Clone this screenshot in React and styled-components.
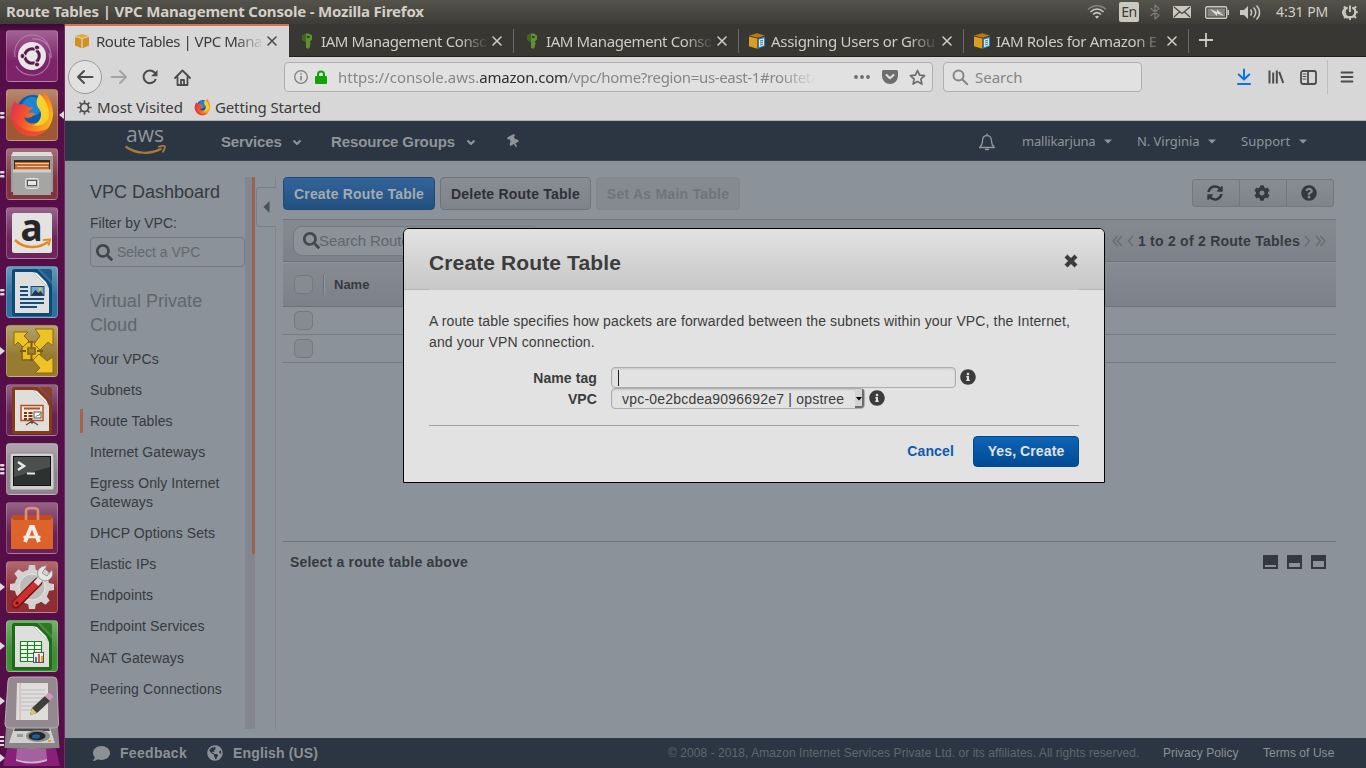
import React from 'react';
import styled, { createGlobalStyle } from 'styled-components';
import {
  FaSearch, FaSyncAlt, FaCog, FaQuestionCircle, FaInfoCircle, FaComment, FaGlobeAmericas, FaThumbtack,
} from 'react-icons/fa';

const ui = '"Noto Sans", "Open Sans", sans-serif';
const arial = '"Liberation Sans", Arial, sans-serif';

const GlobalStyle = createGlobalStyle`
  * { box-sizing: border-box; }
  body { margin: 0; background: #8b9299; font-family: ${arial}; overflow: hidden; }
  svg { display: block; flex: none; overflow: visible; }
`;

const Screen = styled.div`
  position: relative;
  width: 1366px;
  height: 768px;
  overflow: hidden;
  display: grid;
  grid-template: 24px 744px / 65px 1301px;
`;

/* ---------- desktop panel ---------- */
const Panel = styled.header`
  grid-column: 1 / 3;
  display: flex;
  align-items: center;
  justify-content: space-between;
  padding: 0 8px 0 6px;
  background: linear-gradient(#54534b, #3d3c38);
  color: #d3cfc6;
  font-family: ${ui};
`;
const WindowTitle = styled.div`
  padding-bottom: 2px;
  font-size: 15px;
  font-weight: 700;
  line-height: 22px;
  letter-spacing: -0.19px;
  white-space: nowrap;
`;
const Indicators = styled.div`
  display: flex;
  align-items: center;
  height: 24px;
`;
const Indicator = styled.div`
  display: flex;
  justify-content: center;
  width: ${(p) => p.$w}px;
`;
const Keyboard = styled.div`
  width: 20px;
  height: 20px;
  border-radius: 2px;
  background: #cbc8bf;
  color: #3d3c38;
  font-size: 14px;
  line-height: 20px;
  text-align: center;
  letter-spacing: -0.5px;
`;
const Clock = styled.div`
  width: 53px;
  margin: 0 13px 0 15px;
  padding-bottom: 1px;
  font-size: 14px;
  letter-spacing: -0.05px;
  white-space: nowrap;
`;

/* ---------- launcher ---------- */
const LauncherBar = styled.nav`
  height: 744px;
  padding-top: 6px;
  overflow: hidden;
  background: linear-gradient(#3a0a30 0, #560e48 8px);
  border-right: 1px solid #6d3062;
`;
const LauncherRow = styled.div`
  display: grid;
  grid-template-columns: 6px 52px 6px;
  height: 52px;
  margin-bottom: 7px;
  align-items: center;
`;
const Tile = styled.div`
  width: 52px;
  height: 52px;
  border-radius: 4px;
  border: 1px solid rgba(255, 255, 255, 0.2);
  background: linear-gradient(rgba(255, 255, 255, 0.3), rgba(255, 255, 255, 0.02) 60%), ${(p) => p.$tint};
  display: flex;
  align-items: center;
  justify-content: center;
`;
const StackRow = styled.div`
  margin-top: -2px;
`;

/* ---------- browser ---------- */
const Browser = styled.div`
  display: grid;
  grid-template-rows: 33px 40px 24px 40px 577px 30px;
`;
const TabStrip = styled.div`
  display: flex;
  background: #383733;
  border-bottom: 1px solid #201f1d;
  font-family: ${ui};
`;
const Tab = styled.div`
  position: relative;
  width: ${(p) => (p.$active ? 224 : 225)}px;
  height: 33px;
  display: flex;
  align-items: center;
  padding: 0 0 2px ${(p) => (p.$active ? 9 : 10)}px;
  background: ${(p) => (p.$active ? '#d7d7d7' : 'transparent')};
  border-top: 2px solid ${(p) => (p.$active ? '#d9714b' : 'transparent')};
  color: ${(p) => (p.$active ? '#3a3b3c' : '#cfccc4')};
  &:not(:first-child)::after {
    content: '';
    position: absolute;
    right: 0;
    top: 3px;
    width: 1px;
    height: 24px;
    background: #6a6966;
  }
`;
const TabLabel = styled.div`
  width: 165px;
  margin: 0 5px 0 6px;
  font-size: 15px;
  line-height: 24px;
  letter-spacing: ${(p) => p.$ls}px;
  white-space: nowrap;
  mask-image: linear-gradient(90deg, #000 84%, rgba(0, 0, 0, 0.1) 100%);
`;
const NewTab = styled.div`
  padding: 9px 10px;
`;
const Toolbar = styled.div`
  display: flex;
  align-items: center;
  background: #d7d7d7;
  font-family: ${ui};
  font-size: 15px;
`;
const Back = styled.div`
  width: 34px;
  height: 34px;
  margin: 0 8px 0 3px;
  border: 1px solid #9a9a99;
  border-radius: 50%;
  background: #e1e1e1;
  display: flex;
  align-items: center;
  justify-content: center;
`;
const PageTools = styled.div`
  display: flex;
  margin: 0 86px 0 6px;
`;
const ToolIcon = styled.div`
  width: 32px;
  display: flex;
  justify-content: center;
`;
const Field = styled.div`
  width: ${(p) => p.$w}px;
  height: 30px;
  margin-right: 10px;
  display: flex;
  align-items: center;
  border: 1px solid #b0aea9;
  border-radius: 4px;
  background: #e1e1e1;
  color: #868686;
`;
const UrlIcons = styled.div`
  display: flex;
  align-items: center;
  gap: 7px;
  margin-left: 9px;
`;
const Url = styled.div`
  width: 484px;
  margin: 0 31px 0 11px;
  letter-spacing: -0.34px;
  white-space: nowrap;
  mask-image: linear-gradient(90deg, #000 91%, transparent 99%);
  b { font-weight: 400; color: #2e2e2e; letter-spacing: -0.2px; }
  span { letter-spacing: 0; }
`;
const UrlActions = styled.div`
  display: flex;
  align-items: center;
  gap: 11px;
`;
const LensBox = styled.div`
  padding: 0 7px 0 8px;
`;
const RightTools = styled.div`
  display: flex;
  align-items: center;
  margin-left: 76px;
`;
const ToolDivider = styled.div`
  width: 1px;
  height: 34px;
  margin: 0 3px;
  background: #bdbdbc;
`;
const Bookmarks = styled.div`
  display: flex;
  align-items: center;
  padding: 0 0 3px 12px;
  border-bottom: 1px solid #b0aea9;
  background: #d7d7d7;
  color: #3a3b3c;
  font-family: ${ui};
  font-size: 15px;
  white-space: nowrap;
`;
const Bookmark = styled.div`
  width: ${(p) => p.$w}px;
  display: flex;
  align-items: center;
  gap: ${(p) => p.$gap}px;
  letter-spacing: ${(p) => p.$ls}px;
`;

/* ---------- console chrome ---------- */
const ConsoleNav = styled.div`
  display: flex;
  align-items: center;
  padding: 2px 0 0 59px;
  background: #2b3642;
  color: #8f959a;
  border-bottom: 1px solid #3a4550;
`;
const Logo = styled.div`
  width: 97px;
`;
const NavItem = styled.div`
  width: ${(p) => p.$w}px;
  display: flex;
  align-items: center;
  justify-content: space-between;
  margin-right: ${(p) => p.$mr}px;
  font-size: 15px;
  font-weight: 700;
  letter-spacing: -0.13px;
`;
const AccountItem = styled(NavItem)`
  padding-bottom: 1px;
  font-family: ${ui};
  font-size: 13px;
  font-weight: 400;
  letter-spacing: ${(p) => p.$ls || 0}px;
`;
const Bell = styled.div`
  margin: 0 26px 0 458px;
`;
const FooterBar = styled.footer`
  display: flex;
  align-items: center;
  padding-left: 28px;
  background: #2b3642;
  color: #8b9196;
  font-size: 12px;
  white-space: nowrap;
`;
const FooterStrong = styled.div`
  width: ${(p) => p.$w}px;
  display: flex;
  align-items: center;
  gap: 10px;
  font-size: 14px;
  font-weight: 700;
  letter-spacing: ${(p) => p.$ls}px;
`;
const Legal = styled.div`
  width: 471px;
  margin: 0 24px 0 321px;
  color: #5e6870;
  letter-spacing: 0.065px;
`;
const FooterLink = styled.div`
  width: ${(p) => p.$w}px;
  letter-spacing: 0.06px;
`;

/* ---------- console content ---------- */
const Content = styled.main`
  display: flex;
  padding: 16px 0 9px 15px;
  background: #8b9299;
  color: #363a40;
  font-size: 14px;
`;
const Sidebar = styled.aside`
  width: 165px;
  padding-left: 10px;
`;
const Heading = styled.div`
  height: 29px;
  font-size: 18px;
  line-height: 31px;
`;
const FilterLabel = styled.div`
  height: 31px;
  line-height: 34px;
  letter-spacing: 0.05px;
`;
const VpcFilter = styled.div`
  width: 155px;
  height: 30px;
  padding-left: 5px;
  display: flex;
  align-items: center;
  gap: 4px;
  border: 1px solid #757982;
  border-radius: 4px;
  color: #63696f;
  svg { color: #41454a; }
`;
const Section = styled.div`
  margin: 22px 0 7.1px;
  color: #60676d;
  font-size: 18px;
  line-height: 24px;
  letter-spacing: 0.03px;
`;
const SideLink = styled.div`
  margin-left: -10px;
  padding: 6px 0 6.06px 10px;
  line-height: 19px;
  letter-spacing: 0.1px;
  background: ${(p) => (p.$active ? 'linear-gradient(#a8614a, #a8614a) 0 3px / 3px 24px no-repeat' : 'none')};
`;
const Track = styled.div`
  width: 10px;
  height: 552px;
  background: #83868f;
  display: flex;
  justify-content: flex-end;
`;
const Thumb = styled.div`
  width: 3px;
  height: 377px;
  background: #98644f;
`;
const Rail = styled.div`
  width: 21px;
  height: 552px;
  margin-right: 7px;
  padding-top: 10px;
  background: linear-gradient(#80848c, #80848c) 20px 0 / 1px 100% no-repeat;
`;
const Collapse = styled.div`
  width: 20px;
  height: 40px;
  margin-left: 1px;
  padding: 13px 0 0 6px;
  border: 1px solid #7b7f88;
  border-right: 0;
  border-radius: 4px 0 0 4px;
  background: #8b9299;
`;
const Main = styled.section`
  width: 1053px;
`;
const ActionRow = styled.div`
  display: flex;
  justify-content: space-between;
  height: 42px;
  padding-right: 2px;
`;
const Actions = styled.div`
  display: flex;
  gap: 5px;
`;
const Action = styled.div`
  width: ${(p) => p.$w}px;
  height: 33px;
  border: 1px solid ${(p) => (p.$kind === 'primary' ? '#1e4a7a' : p.$kind === 'off' ? '#82868d' : '#6f737b')};
  border-radius: 4px;
  background: ${(p) => (p.$kind === 'primary' ? 'linear-gradient(#33649a, #214f7f)' : p.$kind === 'off' ? '#858a91' : 'linear-gradient(#888c93, #7f838a)')};
  color: ${(p) => (p.$kind === 'primary' ? '#a4abb1' : p.$kind === 'off' ? '#6f757c' : '#2d3137')};
  font-weight: 700;
  line-height: 32px;
  text-align: center;
  letter-spacing: ${(p) => p.$ls}px;
  white-space: nowrap;
`;
const IconGroup = styled.div`
  display: flex;
  width: 142px;
  height: 28px;
  margin-top: 2px;
  border: 1px solid #73777f;
  border-radius: 3px;
  background: linear-gradient(#888c93, #7f838a);
  color: #343840;
`;
const IconCell = styled.div`
  flex: 1;
  padding-right: 2px;
  display: flex;
  align-items: center;
  justify-content: center;
  & + & { border-left: 1px solid #73777f; }
`;
const FilterBar = styled.div`
  height: 43px;
  display: flex;
  align-items: center;
  justify-content: space-between;
  padding: 0 10px;
  border-top: 1px solid #70747c;
  border-bottom: 1px solid #6d7179;
  background: linear-gradient(#858990, #7d8189);
`;
const TableSearch = styled.div`
  width: 248px;
  height: 30px;
  padding-left: 9px;
  display: flex;
  align-items: center;
  border: 1px solid #747981;
  border-radius: 9px;
  background: #8b9299;
  color: #60666c;
  font-size: 15px;
  letter-spacing: -0.1px;
  svg { color: #43474e; margin-right: -1px; }
`;
const Pager = styled.div`
  display: flex;
  align-items: center;
  gap: 4px;
  color: #363a40;
  font-weight: 700;
  letter-spacing: 0.25px;
  white-space: nowrap;
`;
const TableHead = styled.div`
  height: 45px;
  display: flex;
  align-items: center;
  padding-left: 11px;
  border-top: 1px solid #91969d;
  border-bottom: 1px solid #6d7179;
  background: linear-gradient(#868a92, #7c8088);
  font-size: 13px;
  font-weight: 700;
`;
const HeadDivider = styled.div`
  width: 2px;
  height: 21px;
  margin: 0 9px 0 10px;
  background: linear-gradient(90deg, #6d7179 50%, #91969d 50%);
`;
const TableRow = styled.div`
  height: 28px;
  padding: 4px 0 0 11px;
  border-bottom: 1px solid #767a82;
`;
const Check = styled.div`
  width: 19px;
  height: 19px;
  border: 1px solid #747880;
  border-radius: 5px;
  background: #868b92;
`;
const Detail = styled.div`
  height: 41px;
  margin-top: 178px;
  padding: 0 10px 0 7px;
  display: flex;
  align-items: center;
  justify-content: space-between;
  border-top: 1px solid #70747c;
  font-weight: 700;
  letter-spacing: 0.2px;
  line-height: 16px;
`;
const SplitIcons = styled.div`
  display: flex;
  gap: 9px;
`;
const SplitIcon = styled.div`
  width: 15px;
  height: 14px;
  border: solid #343840;
  border-width: ${(p) => p.$top}px 2px 2px;
`;

/* ---------- dialog ---------- */
const Dialog = styled.div`
  position: absolute;
  left: 403px;
  top: 228px;
  width: 702px;
  height: 255px;
  border: 1px solid #000;
  border-radius: 6px 6px 0 0;
  background: #e2e2e2;
  color: #3c3c3c;
  font-size: 14px;
  overflow: hidden;
`;
const DialogHead = styled.div`
  height: 61px;
  padding: 7px 26px 0 25px;
  display: flex;
  align-items: center;
  justify-content: space-between;
  background:
    linear-gradient(#b4b4b4, #b4b4b4) 0 100% / 25px 1px no-repeat,
    linear-gradient(#b4b4b4, #b4b4b4) 100% 100% / 25px 1px no-repeat,
    linear-gradient(#e2e2e2, #c7c7c7);
  font-size: 21px;
  font-weight: 700;
  letter-spacing: 0.12px;
  svg { margin-bottom: 4px; }
`;
const DialogBody = styled.div`
  padding: 21px 25px 0;
`;
const Blurb = styled.p`
  margin: 0 0 14px;
  line-height: 21px;
  letter-spacing: 0.13px;
  white-space: nowrap;
`;
const FormRow = styled.label`
  display: flex;
  align-items: center;
  height: 21px;
  & > svg { margin-bottom: 2px; }
`;
const FormLabel = styled.span`
  width: 168px;
  margin-right: 14px;
  text-align: right;
  font-weight: 700;
  letter-spacing: 0.1px;
`;
const TextInput = styled.span`
  width: 345px;
  height: 21px;
  margin-right: 4px;
  padding: 2px 6px;
  border: 1px solid #adadad;
  border-radius: 4px;
  box-shadow: inset 0 1px 2px rgba(0, 0, 0, 0.12);
`;
const Caret = styled.span`
  display: block;
  width: 1px;
  height: 16px;
  background: #222;
`;
const Select = styled.span`
  width: 254px;
  height: 21px;
  margin-right: 4px;
  padding-left: 10px;
  display: flex;
  justify-content: space-between;
  border: 1px solid #adadad;
  border-radius: 4px;
  box-shadow: inset 0 1px 2px rgba(0, 0, 0, 0.12);
  line-height: 20px;
  letter-spacing: 0.2px;
  white-space: nowrap;
`;
const SelectArrow = styled.span`
  width: 9px;
  height: 19px;
  padding: 8px 0 0 1px;
  border-right: 2px solid #6c6c6c;
  border-bottom: 2px solid #6c6c6c;
  border-radius: 0 2px 3px 0;
  background: #d3d3d3;
`;
const DialogActions = styled.div`
  margin-top: 16px;
  padding-top: 10px;
  display: flex;
  align-items: center;
  justify-content: flex-end;
  border-top: 1px solid #a3a3a3;
`;
const Cancel = styled.span`
  margin-right: 19px;
  padding-bottom: 2px;
  color: #1059ad;
  font-weight: 700;
  letter-spacing: 0.15px;
`;
const Confirm = styled.span`
  width: 106px;
  height: 31px;
  border: 1px solid #00498f;
  border-radius: 4px;
  background: linear-gradient(#0e64b6, #004a92);
  color: #e2e2e2;
  font-weight: 700;
  line-height: 29px;
  text-align: center;
  letter-spacing: 0.1px;
`;

/* ---------- small drawings ---------- */
const Stroke = ({ s = 16, w = 2, c = '#4b4c4d', children, vb, ...rest }) => (
  <svg width={s} height={s} viewBox={vb || '0 0 16 16'} fill="none" stroke={c} strokeWidth={w} strokeLinecap="round" strokeLinejoin="round" {...rest}>{children}</svg>
);
const CloseX = ({ c }) => <Stroke s={12} vb="0 0 12 12" w={1.6} c={c}><path d="M2 2l8 8M10 2l-8 8" /></Stroke>;
const Caretlet = () => <svg width="8" height="5" viewBox="0 0 8 5"><path d="M0 .5h8L4 4.5z" fill="#8f959a" /></svg>;
const ChevronMini = () => <Stroke s={10} vb="0 0 10 10" w={2} c="#8f959a"><path d="M1.500 3.500L5 7l3.500-3.500" strokeLinecap="butt" /></Stroke>;

const CubeIcon = () => (
  <svg width="16" height="16" viewBox="0 0 16 16">
    <path d="M1 3l7-2 7 2-7 2z" fill="#e2a73a" />
    <path d="M1 4l6.4 1.8v9.4L1 12.6zM15 4L8.6 5.8v9.4l6.4-2.6z" fill="#d2921f" />
  </svg>
);
const DocCubeIcon = () => (
  <svg width="16" height="16" viewBox="0 0 16 16">
    <path d="M0 2.6L8 .2l8 2.4-7.5 2.2z" fill="#b97a14" />
    <path d="M0 3.4l8.4 2.2v10.2L0 13.2z" fill="#dd9d22" />
    <path d="M9 5.6l7-2v9.6l-7 2.6z" fill="#2f7fae" />
    <path d="M10 6.6l5-1.4v7.2l-5 1.8z" fill="#dce8ee" />
    <path d="M11 8l3-.8M11 10l3-.9M11 12l3-.9" stroke="#2f7fae" />
  </svg>
);
const KeyIcon = () => (
  <svg width="16" height="16" viewBox="0 0 16 16">
    <path d="M3.500 2.500L7 .5h3l3 2v4l-2 2v1.300l1 .8-1 1.200v2.200L9 16l-2-1.200V9L3.500 7z" fill="#5d8f33" />
    <path d="M3.500 2.500L7 .5v14.300V9L3.500 7z" fill="#3d661e" />
    <rect x="8" y="3" width="2.500" height="2" fill="#2c4716" />
  </svg>
);
const FirefoxIcon = ({ s, id }) => (
  <svg width={s} height={s} viewBox="0 0 48 48">
    <defs>
      <linearGradient id={id} x1="0" y1=".2" x2="1" y2=".6">
        <stop offset="0" stopColor="#e0275a" /><stop offset=".4" stopColor="#f0562a" /><stop offset="1" stopColor="#fbb51c" />
      </linearGradient>
    </defs>
    <circle cx="25" cy="20" r="17" fill="#0a5cb0" />
    <circle cx="24" cy="15" r="10" fill="#1b86d8" />
    <path d="M6 9c1 2 3 4 5 4 3-1 6 0 8 2l6 1c-1 3-4 3-5 5 2 1 6 0 8 2-3 1-4 4-8 4-3 0-3-1-4 0 2 5 8 7 13 5 7-3 10-9 8-16-4-4-5-10 0-16 4 4 9 14 9 22 0 14-10 24-22 24S2 36 2 24C2 18 4 13 6 9z" fill={`url(#${id})`} />
    <path d="M32 2c-4 5-4 11-1 15 5 6 2 15-6 18 10 2 17-5 17-12 0-8-5-17-10-21z" fill="#f9d02c" />
    <path d="M2 24c0 12 10 22 22 22 7 0 12-3 16-8-12 7-31 3-38-14z" fill="#e83a31" opacity=".75" />
  </svg>
);

const DocTile = ({ color, children }) => (
  <svg width="50" height="50" viewBox="0 0 50 50">
    <path d="M5 5a3 3 0 013-3h34a3 3 0 013 3v41a3 3 0 01-3 3H8a3 3 0 01-3-3z" fill={color} opacity=".45" />
    <path d="M5 5a3 3 0 013-3h22l15 16v28a3 3 0 01-3 3H8a3 3 0 01-3-3z" fill={color} />
    <path d="M33 2h9a3 3 0 013 3v9z" fill={color} opacity=".6" />
    <path d="M8 5h18l16 16v25H8z" fill="#dededd" />
    <path d="M26 5l16 16-3-6-9-9z" fill="#f4f4f4" />
    {children}
  </svg>
);

const gearTeeth = [0, 45, 90, 135, 180, 225, 270, 315];

const launcher = [
  { tint: '#7a1f66', icon: (
    <svg width="50" height="50" viewBox="0 0 50 50">
      <path d="M8 26C6 14 14 4 25 4c10 0 17 7 18 16M42 22c3 10-3 20-14 22-9 1-16-3-19-9M25 8c12-1 20 8 19 19" fill="none" stroke="#c58cba" strokeWidth="1.200" opacity=".7" />
      <circle cx="25" cy="25" r="14" fill="#e8e6e7" />
      <circle cx="25" cy="25" r="7.300" fill="none" stroke="#5b1a4d" strokeWidth="3" />
      <path d="M25 25h-12M25 25l6-10.500M25 25l6 10.500" stroke="#e8e6e7" strokeWidth="1.500" />
      <circle cx="15.500" cy="25" r="2.500" fill="#5b1a4d" stroke="#e8e6e7" /><circle cx="30" cy="16.500" r="2.500" fill="#5b1a4d" stroke="#e8e6e7" /><circle cx="30" cy="33.500" r="2.500" fill="#5b1a4d" stroke="#e8e6e7" />
    </svg>) },
  { tint: '#9a5630', pips: 2, focused: true, icon: <FirefoxIcon s={46} id="foxBig" /> },
  { tint: '#7d2f3c', pips: 2, icon: (
    <svg width="50" height="50" viewBox="0 0 50 50">
      <path d="M4 6h42v37H4z" fill="#9b9b9a" /><path d="M4 7l2-4h38l2 4z" fill="#dcdcdc" />
      <path d="M7 11h36v10H7z" fill="#3b2a22" />
      <path d="M8 13h34v8H8z" fill="#c9672f" /><path d="M8 14.500h34M10 17.500h31" stroke="#f0cfa0" strokeWidth="1.200" />
      <path d="M6 20.500h38V46H6z" fill="#a5a5a4" /><path d="M6 20.500h38v3H6z" fill="#cfcfcf" />
      <rect x="18.500" y="29.500" width="13" height="10" rx="2" fill="#b5b5b5" stroke="#e3e3e3" />
      <rect x="20.500" y="31.500" width="9" height="5" fill="#e8e8e8" stroke="#555" />
    </svg>) },
  { tint: '#6b2159', icon: (
    <svg width="50" height="50" viewBox="0 0 50 50">
      <rect x="5" y="5" width="40" height="40" rx="2.500" fill="#e3e3e2" />
      <text x="24.500" y="33" textAnchor="middle" fontFamily="Noto Sans, sans-serif" fontWeight="700" fontSize="37" fill="#262626">a</text>
      <path d="M8 32c9 9 23 9 33 2" fill="none" stroke="#e58a1b" strokeWidth="2.500" />
      <path d="M36 32l7-.5-1.500 6" fill="none" stroke="#e58a1b" strokeWidth="2" />
    </svg>) },
  { tint: '#2b6d9b', pips: 2, icon: (
    <DocTile color="#0d4a78">
      <path d="M13 20h8M13 24h8M13 28h8M13 32h24M13 36h24M13 40h17" stroke="#124f7d" strokeWidth="1.800" />
      <rect x="24" y="19.500" width="13" height="9" fill="#6fa9cf" stroke="#124f7d" /><path d="M24.500 28l4-5 3 3 2-2 3 4z" fill="#333" /><circle cx="33" cy="22" r="1.500" fill="#e6c23c" />
    </DocTile>) },
  { tint: '#94782c', pips: 1, icon: (
    <svg width="50" height="50" viewBox="0 0 50 50">
      <path d="M18 19h13v12H18z" fill="none" stroke="#7b5c0c" strokeWidth="7" />
      <path d="M18 19h13v12H18z" fill="none" stroke="#e9bb24" strokeWidth="4.500" />
      <path d="M7 6h14l-4 4 5 5-6 6-5-5-4 4zM28 3h18v17l-5-4-8 8-6-6 6-8zM46 47H28l5-5-7-8 6-6 8 7 6-4z" fill="#edc327" stroke="#8a690e" strokeWidth="1" />
      <path d="M24.500 15v6M24.500 29v6M13 25h6M30 25h6" stroke="#7b5c0c" strokeWidth="2" />
    </svg>) },
  { tint: '#64204e', icon: (
    <DocTile color="#863c12">
      <path d="M14 20.500h22v15H14z" fill="#f0e9e4" stroke="#b4511d" strokeWidth="1.500" />
      <path d="M17 23.500h16" stroke="#b4511d" strokeWidth="2" /><path d="M17 28h3M17 31h3M17 34h3M21.500 28h4M21.500 31h4M21.500 34h4" stroke="#7a3612" strokeWidth="1.800" />
      <rect x="27" y="27" width="7" height="6" fill="#fff" stroke="#555" /><path d="M28.500 32l2-2 1 1 2-3" fill="none" stroke="#3c9a35" />
      <path d="M25 36l-6 4M25 36l6 4M25 36v3" stroke="#555" strokeWidth="1.300" />
    </DocTile>) },
  { tint: '#8e8089', pips: 3, icon: (
    <svg width="50" height="50" viewBox="0 0 50 50">
      <rect x="3" y="9" width="44" height="37" rx="2" fill="#cfcfce" stroke="#8b8b8b" />
      <rect x="6.500" y="12.500" width="37" height="29" fill="#2d3130" stroke="#111" />
      <path d="M7 13h36v10L7 33z" fill="#4b504e" />
      <path d="M11 18l6 4-6 4" fill="none" stroke="#e9e9e9" strokeWidth="2.500" /><path d="M20 29.500h8" stroke="#e9e9e9" strokeWidth="2" />
    </svg>) },
  { tint: '#662052', icon: (
    <svg width="50" height="50" viewBox="0 0 50 50">
      <path d="M4 15l3-3h36l3 3v31H4z" fill="#dd632a" /><path d="M4 15l3-3h36l3 3-3 2H7z" fill="#c04c1c" />
      <path d="M19 17V8c0-4 12-4 12 0v9" fill="none" stroke="#e3906c" strokeWidth="2.500" />
      <path d="M18 39l6-15h2l6 15" fill="none" stroke="#f0ede9" strokeWidth="3.800" /><path d="M16.500 34h17" stroke="#f0ede9" strokeWidth="2.500" />
    </svg>) },
  { tint: '#8d2930', pips: 1, icon: (
    <svg width="50" height="50" viewBox="0 0 50 50">
      {gearTeeth.map((a) => <path key={a} d="M21 9l1-6h6l1 6z" fill="#d2d2d1" transform={`rotate(${a} 25 25)`} />)}
      <circle cx="25" cy="25" r="17.500" fill="#d2d2d1" />
      <circle cx="25" cy="25" r="13" fill="#bcbcbb" stroke="#e6e6e5" />
      <path d="M9 42L31 20" stroke="#7d0f14" strokeWidth="9" strokeLinecap="round" />
      <path d="M9 41.500L31 20" stroke="#cf2f2f" strokeWidth="6.500" strokeLinecap="round" />
      <path d="M29 22l7-8" stroke="#dededd" strokeWidth="6" />
      <path d="M40 4c-6-1-11 4-9 10 2 5 9 7 13 2 2-2 2-5 1-8l-5 6-5-3z" fill="#e4e4e3" stroke="#858585" strokeWidth=".8" />
      <circle cx="10" cy="41" r="1.600" fill="#6b0b10" />
    </svg>) },
  { tint: '#3c8c31', pips: 1, icon: (
    <DocTile color="#1d6a18">
      <path d="M13.500 20.500h21v20h-21zM13.500 24.500h21M13.500 28.500h21M13.500 32.500h21M13.500 36.500h21M20.500 20v20M27.500 20v20" fill="#f3f7f2" stroke="#1f8419" strokeWidth="1.200" />
      <rect x="26.500" y="31.500" width="10" height="10" fill="#eee" stroke="#555" /><path d="M28 36h2v5h-2z" fill="#3c7fc0" /><path d="M31 33h2v8h-2z" fill="#d9602a" /><path d="M34 35h2v6h-2z" fill="#d8a42a" />
    </DocTile>) },
];

const Pips = ({ n = 0 }) => (
  <svg width="6" height="16" viewBox="0 0 6 16" fill="#dcdadb">
    {n === 1 && <path d="M0 4l5 4-5 4z" />}
    {n === 2 && <><rect y="5" width="4.500" height="2.500" rx="1" /><rect y="9" width="4.500" height="2.500" rx="1" /></>}
    {n === 3 && <><rect y="3" width="4.500" height="2.500" rx="1" /><rect y="7" width="4.500" height="2.500" rx="1" /><rect y="11" width="4.500" height="2.500" rx="1" /></>}
  </svg>
);

const FoldedStack = () => (
  <svg width="64" height="91" viewBox="0 677 64 91">
    <path d="M7 749h49l4 17H3z" fill="#8a1f7a" /><path d="M17 749h29l1 10q-15 5-31 0z" fill="#a560a0" /><path d="M16 759q15 5 31 0v2q-15 5-31 0z" fill="#cfb4cc" />
    <path d="M6 727h52l1.500 21Q32 750 4.500 748z" fill="#8c8389" />
    <path d="M14 728h36l5 15H9z" fill="#cfcfce" /><path d="M15 728h34l1 3H14z" fill="#4a4a49" />
    <ellipse cx="38" cy="736" rx="12" ry="6" fill="#8d8d8c" /><ellipse cx="37" cy="736" rx="8.500" ry="4.300" fill="#23272c" /><ellipse cx="36" cy="736.500" rx="4" ry="2.200" fill="#1d5fa3" />
    <path d="M17 734h6v3h-6z" fill="#9a9a9a" /><path d="M48 740h3v2h-3z" fill="#e0a02e" />
    <path d="M8 681q0-4 4-4h41q4 0 4 4l1.500 43q0 4-4 4H9q-4 0-4-4z" fill="#948990" stroke="#b6adb3" />
    <path d="M17 683h31v37H16z" fill="#deddda" /><path d="M21 690h24M21 694h24M21 698h24M21 702h20M21 706h20M21 710h18" stroke="#b8bbc4" /><path d="M20 683v37" stroke="#dba0a0" strokeWidth=".8" />
    <path d="M30 715l2-7 13-12 5 5-13 12z" fill="#3e3e3e" /><path d="M30 715l2-7 5 5z" fill="#d8c66e" /><path d="M45 696l3-3q4 0 5 4l-3 4z" fill="#cf93b8" />
    <path d="M0 697l5 4-5 4zM0 754l5 4-5 4z" fill="#dcdadb" />
    <path d="M0 736h4v2H0zM0 740h4v2H0zM0 744h4v2H0z" fill="#dcdadb" />
  </svg>
);

const Launcher = () => (
  <LauncherBar>
    {launcher.map((item, i) => (
      <LauncherRow key={i}>
        <Pips n={item.pips} />
        <Tile $tint={item.tint}>{item.icon}</Tile>
        {item.focused && <svg width="6" height="10" viewBox="0 0 6 10"><path d="M6 1v8L1 5z" fill="#dcdadb" /></svg>}
      </LauncherRow>
    ))}
    <StackRow><FoldedStack /></StackRow>
  </LauncherBar>
);

const TopPanel = () => (
  <Panel>
    <WindowTitle>Route Tables | VPC Management Console - Mozilla Firefox</WindowTitle>
    <Indicators>
      <Indicator $w={44}>
        <svg width="20" height="14" viewBox="0 0 20 14" fill="none" stroke="#cbc8bf" strokeWidth="1.500">
          <path d="M1 4.500c5-5 13-5 18 0" opacity=".45" /><path d="M3.500 7c4-4 9-4 13 0M6 9.500c2.500-2.500 5.500-2.500 8 0" /><path d="M8 11.500c1-1 3-1 4 0l-2 2.200z" fill="#cbc8bf" stroke="none" />
        </svg>
      </Indicator>
      <Keyboard>En</Keyboard>
      <Indicator $w={31}>
        <Stroke s={16} w={1.3} c="#7d7b75"><path d="M4 4.500l8 7-4 3.500V1l4 3.500-8 7" /></Stroke>
      </Indicator>
      <Indicator $w={24}>
        <svg width="18" height="12" viewBox="0 0 18 12"><rect width="18" height="12" rx="1" fill="#cbc8bf" /><path d="M1 1l8 6.500L17 1M1 11l5.500-5M17 11l-5.500-5" fill="none" stroke="#45443f" strokeWidth="1.200" /></svg>
      </Indicator>
      <Indicator $w={46}>
        <svg width="25" height="13" viewBox="0 0 25 13"><rect x=".7" y=".7" width="21" height="11.600" rx="1.500" fill="none" stroke="#cbc8bf" strokeWidth="1.400" /><rect x="2.500" y="2.500" width="17.500" height="8" fill="#85837d" /><path d="M22.500 4h1.500v5h-1.500z" fill="#cbc8bf" /><path d="M5 3l7 3V3.500l7 6.500-7-2.500V10z" fill="#e0ddd5" /></svg>
      </Indicator>
      <Indicator $w={21}>
        <svg width="21" height="17" viewBox="0 0 21 17"><path d="M0 6h4l4-4v13l-4-4H0z" fill="#cbc8bf" /><path d="M10.500 5.500c1.500 2 1.500 4 0 6M13.500 3.500c3 3 3 7 0 10M16.500 1.500c4 4 4 10 0 14" fill="none" stroke="#cbc8bf" strokeWidth="1.500" /></svg>
      </Indicator>
      <Clock>4:31 PM</Clock>
      <svg width="16" height="16" viewBox="0 0 16 16" fill="none" stroke="#cbc8bf" strokeWidth="1.900"><path d="M5.500 3.700A4.900 4.900 0 108 13a4.900 4.900 0 002.500-9.300" /><path d="M8 13a4.900 4.900 0 01-2.500-9.300M8 13a4.900 4.900 0 002.500-9.300M8 1.500V8M1.800 2.500l1.800 1.500M14.200 2.500L12.400 4M.2 8.300h2.500M13.300 8.300h2.500M2 14l1.800-1.700M14 14l-1.800-1.700M8 13.500V16" /></svg>
    </Indicators>
  </Panel>
);

const tabs = [
  { label: 'Route Tables | VPC Mana', icon: <CubeIcon />, active: true, ls: -0.48 },
  { label: 'IAM Management Conso', icon: <KeyIcon />, ls: -0.4 },
  { label: 'IAM Management Conso', icon: <KeyIcon />, ls: -0.4 },
  { label: 'Assigning Users or Grou', icon: <DocCubeIcon />, ls: -0.3 },
  { label: 'IAM Roles for Amazon E', icon: <DocCubeIcon />, ls: -0.33 },
];

const sideLinks = ['Your VPCs', 'Subnets', 'Route Tables', 'Internet Gateways', 'Egress Only Internet Gateways', 'DHCP Options Sets', 'Elastic IPs', 'Endpoints', 'Endpoint Services', 'NAT Gateways', 'Peering Connections'];

const Chev = ({ d, w }) => <svg width={w} height="12" viewBox={`0 0 ${w} 12`} fill="none" stroke="#666b72" strokeWidth="1.300"><path d={d} /></svg>;

const AddressField = () => (
  <Field $w={649}>
    <UrlIcons>
      <svg width="14" height="14" viewBox="0 0 14 14" fill="none" stroke="#808080"><circle cx="7" cy="7" r="6.300" strokeWidth="1.300" /><path d="M7 6v4.500M7 3.200v1.500" strokeWidth="1.600" /></svg>
      <svg width="12" height="14" viewBox="0 0 12 14"><path d="M3 6V4.500a3 3 0 016 0V6" fill="none" stroke="#12a405" strokeWidth="2" /><rect y="6" width="12" height="8" rx="1" fill="#12a405" /></svg>
    </UrlIcons>
    <Url><span>https://console.aws.</span><b>amazon.com</b>/vpc/home?region=us-east-1#routeta</Url>
    <UrlActions>
      <svg width="18" height="4" viewBox="0 0 18 4" fill="#6d6d6d"><circle cx="3" cy="2" r="1.900" /><circle cx="9" cy="2" r="1.900" /><circle cx="15" cy="2" r="1.900" /></svg>
      <svg width="16" height="14" viewBox="0 0 16 14"><path d="M1.500 0h13A1.500 1.500 0 0116 1.500V6a8 8 0 01-16 0V1.500A1.500 1.500 0 011.500 0z" fill="#6d6d6d" /><path d="M4.500 5L8 8.300 11.500 5" fill="none" stroke="#e1e1e1" strokeWidth="2" strokeLinecap="round" strokeLinejoin="round" /></svg>
      <Stroke s={17} vb="0 0 17 17" w={1.7} c="#6d6d6d"><path d="M8.500 1.500l2.100 4.600 5 .6-3.700 3.400 1 5-4.400-2.500-4.400 2.500 1-5L1.400 6.700l5-.6z" /></Stroke>
    </UrlActions>
  </Field>
);

export default function App() {
  return (
    <>
      <GlobalStyle />
      <Screen>
        <TopPanel />
        <Launcher />
        <Browser>
          <TabStrip>
            {tabs.map((t, i) => (
              <Tab key={i} $active={t.active}>
                {t.icon}
                <TabLabel $ls={t.ls}>{t.label}</TabLabel>
                <CloseX c={t.active ? '#4b4c4d' : '#cfccc4'} />
              </Tab>
            ))}
            <NewTab><Stroke s={14} vb="0 0 14 14" w={1.8} c="#cfccc4"><path d="M7 0v14M0 7h14" strokeLinecap="butt" /></Stroke></NewTab>
          </TabStrip>
          <Toolbar>
            <Back><Stroke s={18} vb="0 0 18 18" w={2}><path d="M16.500 9H2M8 3L2 9l6 6" /></Stroke></Back>
            <Stroke s={18} vb="0 0 18 18" w={2} c="#a4a4a4"><path d="M1.500 9H16M10 3l6 6-6 6" /></Stroke>
            <PageTools>
              <ToolIcon>
                <Stroke s={16} w={2.1}><path d="M13.800 10A6.300 6.300 0 1112.500 3.500l1 1" strokeLinecap="butt" /><path d="M15.500 .8v6.400H9.200z" fill="#4b4c4d" stroke="none" /></Stroke>
              </ToolIcon>
              <ToolIcon>
                <Stroke s={17} vb="0 0 17 17" w={1.8}><path d="M1 9l7.500-7.500L16 9M3.500 8v8h10V8" /><path d="M7 15.500V11h3v4.500" /></Stroke>
              </ToolIcon>
            </PageTools>
            <AddressField />
            <Field $w={199}>
              <LensBox><Stroke s={16} w={2} c="#868686"><circle cx="6.500" cy="6.500" r="5" /><path d="M10.500 10.500l4.700 4.700" /></Stroke></LensBox>
              <span>Search</span>
            </Field>
            <RightTools>
              <ToolIcon><Stroke s={16} w={2} c="#0a74e0"><path d="M8 .500V10M2.800 5.500L8 10.500l5.200-5M2 15h12" /></Stroke></ToolIcon>
              <ToolIcon><Stroke s={16} w={2} c="#4b4c4d"><path d="M1.500 1.500v13M5.200 3.500v11M8.800 1.500v13M11.200 2.800L15.200 14" strokeLinecap="butt" /></Stroke></ToolIcon>
              <ToolIcon><Stroke s={17} vb="0 0 17 17" w={1.8} c="#4b4c4d"><rect x="1" y="2" width="15" height="13" rx="2" /><path d="M8 2v13" /><path d="M3 5h3M3 7.500h3M3 10h3" strokeWidth="1" /></Stroke></ToolIcon>
              <ToolDivider />
              <ToolIcon><Stroke s={14} vb="0 0 14 14" w={1.8} c="#4b4c4d"><path d="M1.500 2.500h11M1.500 7h11M1.500 11.500h11" /></Stroke></ToolIcon>
            </RightTools>
          </Toolbar>
          <Bookmarks>
            <Bookmark $w={117} $gap={5} $ls={-0.02}>
              <Stroke s={15} vb="0 0 15 15" w={1.7} c="#4b4c4d"><circle cx="7.500" cy="7.500" r="4" /><path d="M7.500 1v2M7.500 12v2M1 7.500h2M12 7.500h2M3 3l1.200 1.200M10.800 10.800L12 12M12 3l-1.200 1.200M4.200 10.800L3 12" /></Stroke>
              <span>Most Visited</span>
            </Bookmark>
            <Bookmark $w={130} $gap={4} $ls={-0.13}>
              <FirefoxIcon s={17} id="foxSmall" />
              <span>Getting Started</span>
            </Bookmark>
          </Bookmarks>

          <ConsoleNav>
            <Logo>
              <svg width="44" height="30" viewBox="0 0 44 30">
                <text x="2" y="15" fontFamily="Open Sans, sans-serif" fontWeight="500" fontSize="21" textLength="38" lengthAdjust="spacingAndGlyphs" fill="#8f959a">aws</text>
                <path d="M1.500 19.500c11 8 26 8 36 2" fill="none" stroke="#a97a3d" strokeWidth="2.200" />
                <path d="M34 20c4-1.500 7-1.500 7-.5s-1 4-2.500 6" fill="none" stroke="#a97a3d" strokeWidth="1.700" />
              </svg>
            </Logo>
            <NavItem $w={81} $mr={29}>Services<ChevronMini /></NavItem>
            <NavItem $w={145} $mr={31}>Resource Groups<ChevronMini /></NavItem>
            <FaThumbtack size={13} transform="rotate(-28)" />
            <Bell>
              <Stroke s={18} vb="0 0 18 18" w={1.3} c="#8f959a"><path d="M1.500 14.500h15c-2-1.500-3-3-3-6.500 0-3-1.500-5.500-4.500-5.500S4.500 5 4.500 8c0 3.500-1 5-3 6.500zM7.500 16.500h3M9 1v1.500" /></Stroke>
            </Bell>
            <AccountItem $w={90} $mr={25} $ls={-0.2}>mallikarjuna<Caretlet /></AccountItem>
            <AccountItem $w={79} $mr={25} $ls={-0.05}>N. Virginia<Caretlet /></AccountItem>
            <AccountItem $w={66} $mr={0}>Support<Caretlet /></AccountItem>
          </ConsoleNav>

          <Content>
            <Sidebar>
              <Heading>VPC Dashboard</Heading>
              <FilterLabel>Filter by VPC:</FilterLabel>
              <VpcFilter><FaSearch size={17} />Select a VPC</VpcFilter>
              <Section>Virtual Private Cloud</Section>
              {sideLinks.map((l) => <SideLink key={l} $active={l === 'Route Tables'}>{l}</SideLink>)}
            </Sidebar>
            <Track><Thumb /></Track>
            <Rail>
              <Collapse><svg width="7" height="12" viewBox="0 0 7 12"><path d="M6.500 0v12L.5 6z" fill="#4c5157" /></svg></Collapse>
            </Rail>
            <Main>
              <ActionRow>
                <Actions>
                  <Action $w={152} $kind="primary" $ls={0.2}>Create Route Table</Action>
                  <Action $w={151} $ls={0.22}>Delete Route Table</Action>
                  <Action $w={144} $kind="off" $ls={0.24}>Set As Main Table</Action>
                </Actions>
                <IconGroup>
                  <IconCell><FaSyncAlt size={16} /></IconCell>
                  <IconCell><FaCog size={16} /></IconCell>
                  <IconCell><FaQuestionCircle size={16} /></IconCell>
                </IconGroup>
              </ActionRow>
              <FilterBar>
                <TableSearch><FaSearch size={17} />Search Route Tables</TableSearch>
                <Pager>
                  <Chev w={11} d="M5.500 1L1 6l4.500 5M10 1L5.500 6l4.500 5" />
                  <Chev w={7} d="M6 1L1.500 6 6 11" />
                  <span>1 to 2 of 2 Route Tables</span>
                  <Chev w={7} d="M1 1l4.500 5L1 11" />
                  <Chev w={11} d="M1 1l4.500 5L1 11M5.500 1L10 6l-4.500 5" />
                </Pager>
              </FilterBar>
              <TableHead><Check /><HeadDivider />Name</TableHead>
              <TableRow><Check /></TableRow>
              <TableRow><Check /></TableRow>
              <Detail>
                <span>Select a route table above</span>
                <SplitIcons><SplitIcon $top={10} /><SplitIcon $top={8} /><SplitIcon $top={6} /></SplitIcons>
              </Detail>
            </Main>
          </Content>

          <FooterBar>
            <FooterStrong $w={114} $ls={0.3}><FaComment size={17} />Feedback</FooterStrong>
            <FooterStrong $w={140} $ls={0.15}><FaGlobeAmericas size={16} />English (US)</FooterStrong>
            <Legal>© 2008 - 2018, Amazon Internet Services Private Ltd. or its affiliates. All rights reserved.</Legal>
            <FooterLink $w={100}>Privacy Policy</FooterLink>
            <FooterLink $w={80}>Terms of Use</FooterLink>
          </FooterBar>
        </Browser>

        <Dialog>
          <DialogHead>
            <span>Create Route Table</span>
            <Stroke s={14} vb="0 0 14 14" w={4.2} c="#3c3c3c"><path d="M2 2l10 10M12 2L2 12" strokeLinecap="butt" /></Stroke>
          </DialogHead>
          <DialogBody>
            <Blurb>
              A route table specifies how packets are forwarded between the subnets within your VPC, the Internet,<br />
              and your VPN connection.
            </Blurb>
            <FormRow><FormLabel>Name tag</FormLabel><TextInput><Caret /></TextInput><FaInfoCircle size={16} /></FormRow>
            <FormRow>
              <FormLabel>VPC</FormLabel>
              <Select>
                vpc-0e2bcdea9096692e7 | opstree
                <SelectArrow><svg width="6" height="4" viewBox="0 0 6 4"><path d="M0 0h6L3 3.500z" fill="#000" /></svg></SelectArrow>
              </Select>
              <FaInfoCircle size={16} />
            </FormRow>
            <DialogActions><Cancel>Cancel</Cancel><Confirm>Yes, Create</Confirm></DialogActions>
          </DialogBody>
        </Dialog>
      </Screen>
    </>
  );
}
